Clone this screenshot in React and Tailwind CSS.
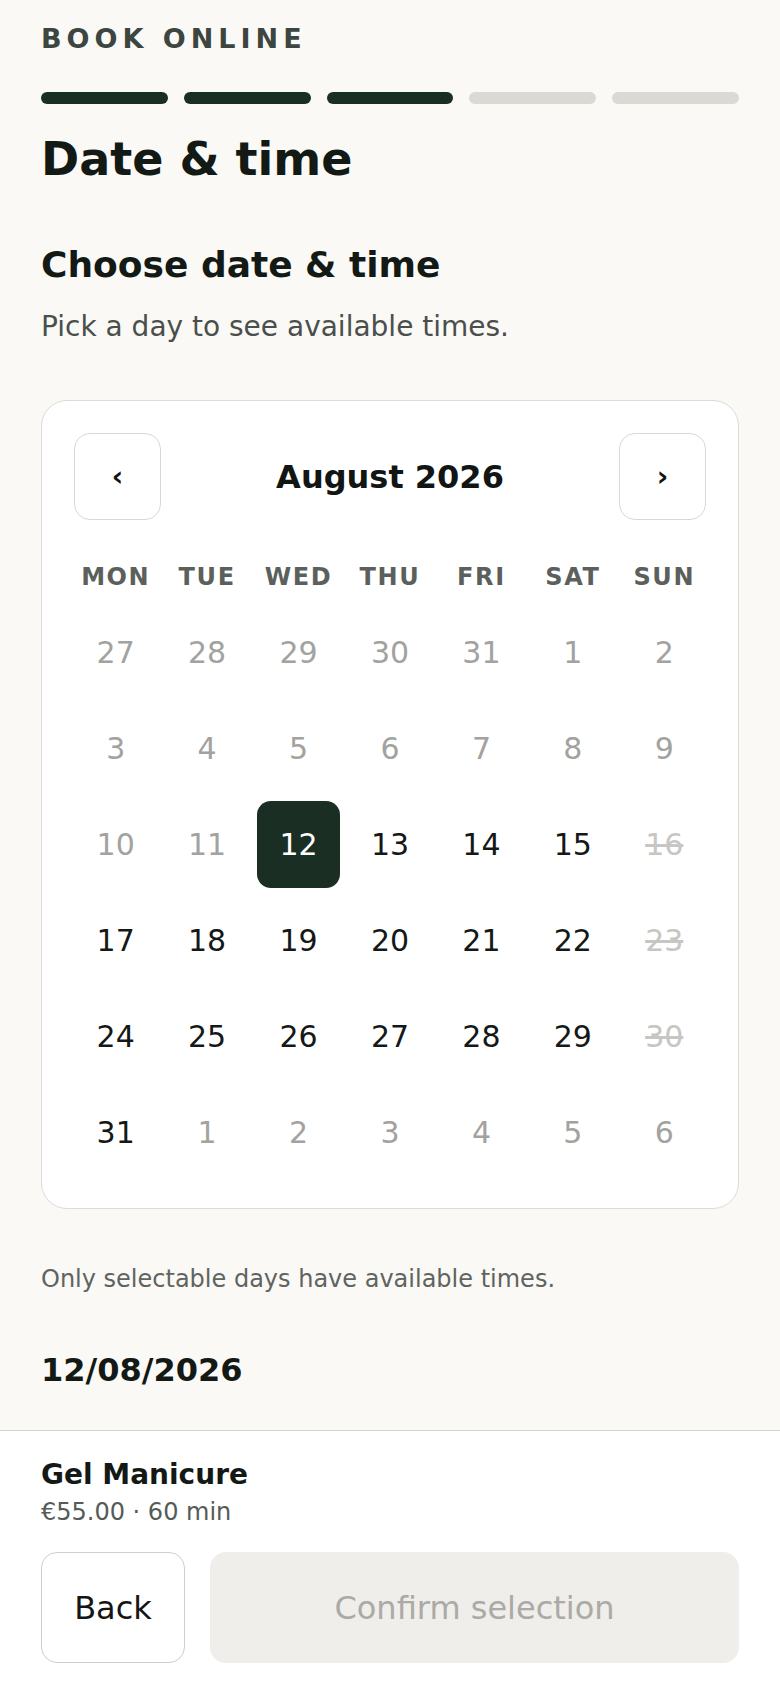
import React from "react";

const WEEKDAYS = ["MON", "TUE", "WED", "THU", "FRI", "SAT", "SUN"];

// August 2026 starts on a Saturday, so the grid opens on Monday 27 July
function buildDays() {
  const days = [];
  const start = new Date(2026, 6, 27);
  for (let i = 0; i < 42; i++) {
    const date = new Date(start);
    date.setDate(start.getDate() + i);
    const inMonth = date.getMonth() === 7;
    const day = date.getDate();
    let kind = "muted";
    if (inMonth && day >= 12) kind = date.getDay() === 0 ? "closed" : "open";
    if (inMonth && day === 12) kind = "selected";
    days.push({ key: i, day, kind });
  }
  return days;
}

const getDayClasses = (kind) => {
  switch (kind) {
    case "selected":
      return "bg-[#1b2e24] text-white";
    case "open":
      return "text-[#141816]";
    case "closed":
      return "text-[#c6c6c3] line-through";
    case "muted":
    default:
      return "text-[#a2a29f]";
  }
};

export default function App() {
  const days = buildDays();
  const steps = [true, true, true, false, false];

  return (
    <div className="w-full min-h-screen flex flex-col bg-[#faf9f6] font-['DejaVu_Sans',sans-serif]">
      <div className="px-[41px] pt-[23px] pb-[40px]">
        <p className="text-[27px] leading-[32px] font-bold tracking-[5px] text-[#3d4540]">BOOK ONLINE</p>

        <div className="mt-[37px] flex gap-4">
          {steps.map((done, index) => (
            <div
              key={index}
              className={`h-[12px] flex-1 rounded-full ${done ? "bg-[#1b2e24]" : "bg-[#dbd9d4]"}`}
            />
          ))}
        </div>

        <h1 className="mt-[28px] text-[46px] leading-[54px] font-bold text-[#131915]">Date &amp; time</h1>

        <h2 className="mt-[58px] text-[36px] leading-[42px] font-bold text-[#131915]">Choose date &amp; time</h2>
        <p className="mt-[24px] text-[28px] leading-[34px] text-[#4a4f4b]">Pick a day to see available times.</p>

        <div className="mt-[56px] rounded-[26px] border border-[#dddbd6] bg-white p-8">
          <div className="flex items-center justify-between">
            <button className="w-[87px] h-[87px] rounded-[16px] border border-[#d9d8d4] bg-white flex items-center justify-center text-[28px] font-bold text-[#111]">
              ‹
            </button>
            <span className="text-[32px] leading-[38px] font-bold text-[#111513]">August 2026</span>
            <button className="w-[87px] h-[87px] rounded-[16px] border border-[#d9d8d4] bg-white flex items-center justify-center text-[28px] font-bold text-[#111]">
              ›
            </button>
          </div>

          <div className="mt-[43px] grid grid-cols-7 gap-x-2">
            {WEEKDAYS.map((name) => (
              <div key={name} className="text-center text-[24px] leading-[28px] font-bold tracking-[1.6px] text-[#5b605c]">
                {name}
              </div>
            ))}
          </div>

          <div className="mt-[18px] grid grid-cols-7 gap-x-2 gap-y-[9px]">
            {days.map((item) => (
              <div
                key={item.key}
                className={`h-[87px] rounded-[14px] flex items-center justify-center text-[30px] ${getDayClasses(item.kind)}`}
              >
                {item.day}
              </div>
            ))}
          </div>
        </div>

        <p className="mt-[56px] text-[24px] leading-[28px] text-[#5f6460]">Only selectable days have available times.</p>

        <p className="mt-[58px] text-[32px] leading-[38px] font-bold text-[#131915]">12/08/2026</p>
      </div>

      <div className="mt-auto border-t border-[#d6d4cf] bg-white px-[41px] pt-[27px] pb-[25px]">
        <p className="text-[28px] leading-[34px] font-bold text-[#131915]">Gel Manicure</p>
        <p className="mt-[6px] text-[24px] leading-[28px] text-[#555b57]">€55.00 · 60 min</p>

        <div className="mt-[26px] flex gap-[25px]">
          <button className="w-[144px] h-[111px] rounded-[16px] border border-[#cfceca] bg-white text-[32px] text-[#151515]">
            Back
          </button>
          <button className="flex-1 h-[111px] rounded-[16px] bg-[#efeeea] text-[32px] text-[#abaaa6]">
            Confirm selection
          </button>
        </div>
      </div>
    </div>
  );
}
